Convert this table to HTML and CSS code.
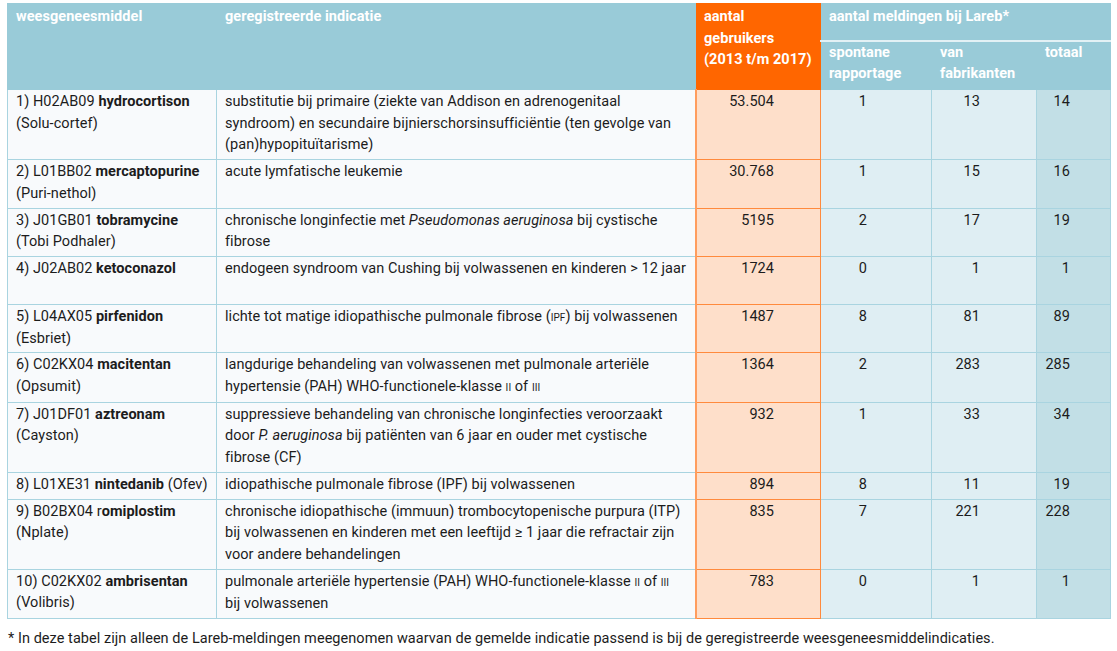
FILE: index.html
```html
<!DOCTYPE html>
<html lang="nl">
<head>
<meta charset="utf-8">
<title>Weesgeneesmiddelen</title>
<link rel="stylesheet" href="styles.css">
</head>
<body>
<table class="tbl">
  <colgroup>
    <col class="c1"><col class="c2"><col class="c3"><col class="c4"><col class="c5"><col class="c6">
  </colgroup>
  <thead>
    <tr class="h1">
      <th rowspan="2" class="hb">weesgeneesmiddel</th>
      <th rowspan="2" class="hb">geregistreerde indicatie</th>
      <th rowspan="2" class="ho">aantal<br>gebruikers<br>(2013 t/m 2017)</th>
      <th colspan="3" class="hb hl">aantal meldingen bij Lareb*</th>
    </tr>
    <tr class="h2">
      <th class="hb hs">spontane<br>rapportage</th>
      <th class="hb hs">van<br>fabrikanten</th>
      <th class="hb hs">totaal</th>
    </tr>
  </thead>
  <tbody>
    <tr>
      <td class="d">1) H02AB09 <b>hydrocortison</b><br>(Solu-cortef)</td>
      <td class="d">substitutie bij primaire (ziekte van Addison en adrenogenitaal<br>syndroom) en secundaire bijnierschorsinsufficiëntie (ten gevolge van<br>(pan)hypopituïtarisme)</td>
      <td class="o">53.504</td>
      <td class="l n1">1</td><td class="l n2">13</td><td class="t">14</td>
    </tr>
    <tr>
      <td class="d">2) L01BB02 <b>mercaptopurine</b><br>(Puri-nethol)</td>
      <td class="d">acute lymfatische leukemie</td>
      <td class="o">30.768</td>
      <td class="l n1">1</td><td class="l n2">15</td><td class="t">16</td>
    </tr>
    <tr>
      <td class="d">3) J01GB01 <b>tobramycine</b><br>(Tobi Podhaler)</td>
      <td class="d">chronische longinfectie met <i>Pseudomonas aeruginosa</i> bij cystische<br>fibrose</td>
      <td class="o">5195</td>
      <td class="l n1">2</td><td class="l n2">17</td><td class="t">19</td>
    </tr>
    <tr class="tall">
      <td class="d">4) J02AB02 <b>ketoconazol</b></td>
      <td class="d">endogeen syndroom van Cushing bij volwassenen en kinderen &gt; 12 jaar</td>
      <td class="o">1724</td>
      <td class="l n1">0</td><td class="l n2">1</td><td class="t">1</td>
    </tr>
    <tr>
      <td class="d">5) L04AX05 <b>pirfenidon</b><br>(Esbriet)</td>
      <td class="d">lichte tot matige idiopathische pulmonale fibrose (<span class="sc">ipf</span>) bij volwassenen</td>
      <td class="o">1487</td>
      <td class="l n1">8</td><td class="l n2">81</td><td class="t">89</td>
    </tr>
    <tr>
      <td class="d">6) C02KX04 <b>macitentan</b><br>(Opsumit)</td>
      <td class="d">langdurige behandeling van volwassenen met pulmonale arteriële<br>hypertensie (PAH) WHO-functionele-klasse <span class="sc">ii</span> of <span class="sc">iii</span></td>
      <td class="o">1364</td>
      <td class="l n1">2</td><td class="l n2">283</td><td class="t">285</td>
    </tr>
    <tr>
      <td class="d">7) J01DF01 <b>aztreonam</b><br>(Cayston)</td>
      <td class="d">suppressieve behandeling van chronische longinfecties veroorzaakt<br>door <i>P. aeruginosa</i> bij patiënten van 6 jaar en ouder met cystische<br>fibrose (CF)</td>
      <td class="o">932</td>
      <td class="l n1">1</td><td class="l n2">33</td><td class="t">34</td>
    </tr>
    <tr>
      <td class="d">8) L01XE31 <b>nintedanib</b> (Ofev)</td>
      <td class="d">idiopathische pulmonale fibrose (IPF) bij volwassenen</td>
      <td class="o">894</td>
      <td class="l n1">8</td><td class="l n2">11</td><td class="t">19</td>
    </tr>
    <tr>
      <td class="d">9) B02BX04 r<b>omiplostim</b><br>(Nplate)</td>
      <td class="d">chronische idiopathische (immuun) trombocytopenische purpura (ITP)<br>bij volwassenen en kinderen met een leeftijd ≥ 1 jaar die refractair zijn<br>voor andere behandelingen</td>
      <td class="o">835</td>
      <td class="l n1">7</td><td class="l n2">221</td><td class="t">228</td>
    </tr>
    <tr>
      <td class="d">10) C02KX02 <b>ambrisentan</b><br>(Volibris)</td>
      <td class="d">pulmonale arteriële hypertensie (PAH) WHO-functionele-klasse <span class="sc">ii</span> of <span class="sc">iii</span><br>bij volwassenen</td>
      <td class="o">783</td>
      <td class="l n1">0</td><td class="l n2">1</td><td class="t">1</td>
    </tr>
  </tbody>
</table>
<p class="note">* In deze tabel zijn alleen de Lareb-meldingen meegenomen waarvan de gemelde indicatie passend is bij de geregistreerde weesgeneesmiddelindicaties.</p>
</body>
</html>
```

FILE: styles.css
```css
html, body {
  margin: 0;
  background: #ffffff;
}
body {
  padding: 3px 0 0 7px;
  font-family: Roboto, "Liberation Sans", sans-serif;
  font-size: 14.5px;
  color: #1c1c1c;
  letter-spacing: 0.05px;
}
.tbl {
  border-collapse: collapse;
  table-layout: fixed;
  width: 1103px;
}
.c1 { width: 209px; }
.c2 { width: 479px; }
.c3 { width: 125px; }
.c4 { width: 111px; }
.c5 { width: 105px; }
.c6 { width: 74px; }

th {
  font-weight: 700;
  color: #ffffff;
  text-align: left;
  vertical-align: top;
  line-height: 21.5px;
  padding: 2px 4px 0 8px;
  white-space: nowrap;
}
.h1 { height: 37px; }
.h2 { height: 49px; }
.hb {
  background: #99cbd8;
  border: 1px solid #99cbd8;
}
.ho {
  background: #ff6600;
  border: 1px solid #ff6600;
}
.hl {
  border-bottom: 2px solid #e3f1f5;
}
.hs {
  padding-top: 0;
}

td {
  vertical-align: top;
  line-height: 21.7px;
  padding: 1px 8px 3px 8px;
  white-space: nowrap;
}
.tall { height: 48px; }
.d {
  background: #f8fafc;
  border: 1px solid #a9d4e0;
}
.o {
  background: #fedfca;
  border: 1px solid #ff8a3d;
  border-left: 2px solid #ff9d5e;
  text-align: right;
  padding-right: 46px;
}
.l {
  background: #dfeef3;
  border: 1px solid #a9d4e0;
  text-align: right;
}
.n1 { padding-right: 64px; }
.n2 { padding-right: 56px; }
.t {
  background: #c2dfe6;
  border: 1px solid #a9d4e0;
  text-align: right;
  padding-right: 40px;
}
.sc {
  font-size: 10px;
  text-transform: uppercase;
}
.note {
  margin: 10px 0 0 1px;
  font-size: 14.5px;
  line-height: 20px;
}
```
